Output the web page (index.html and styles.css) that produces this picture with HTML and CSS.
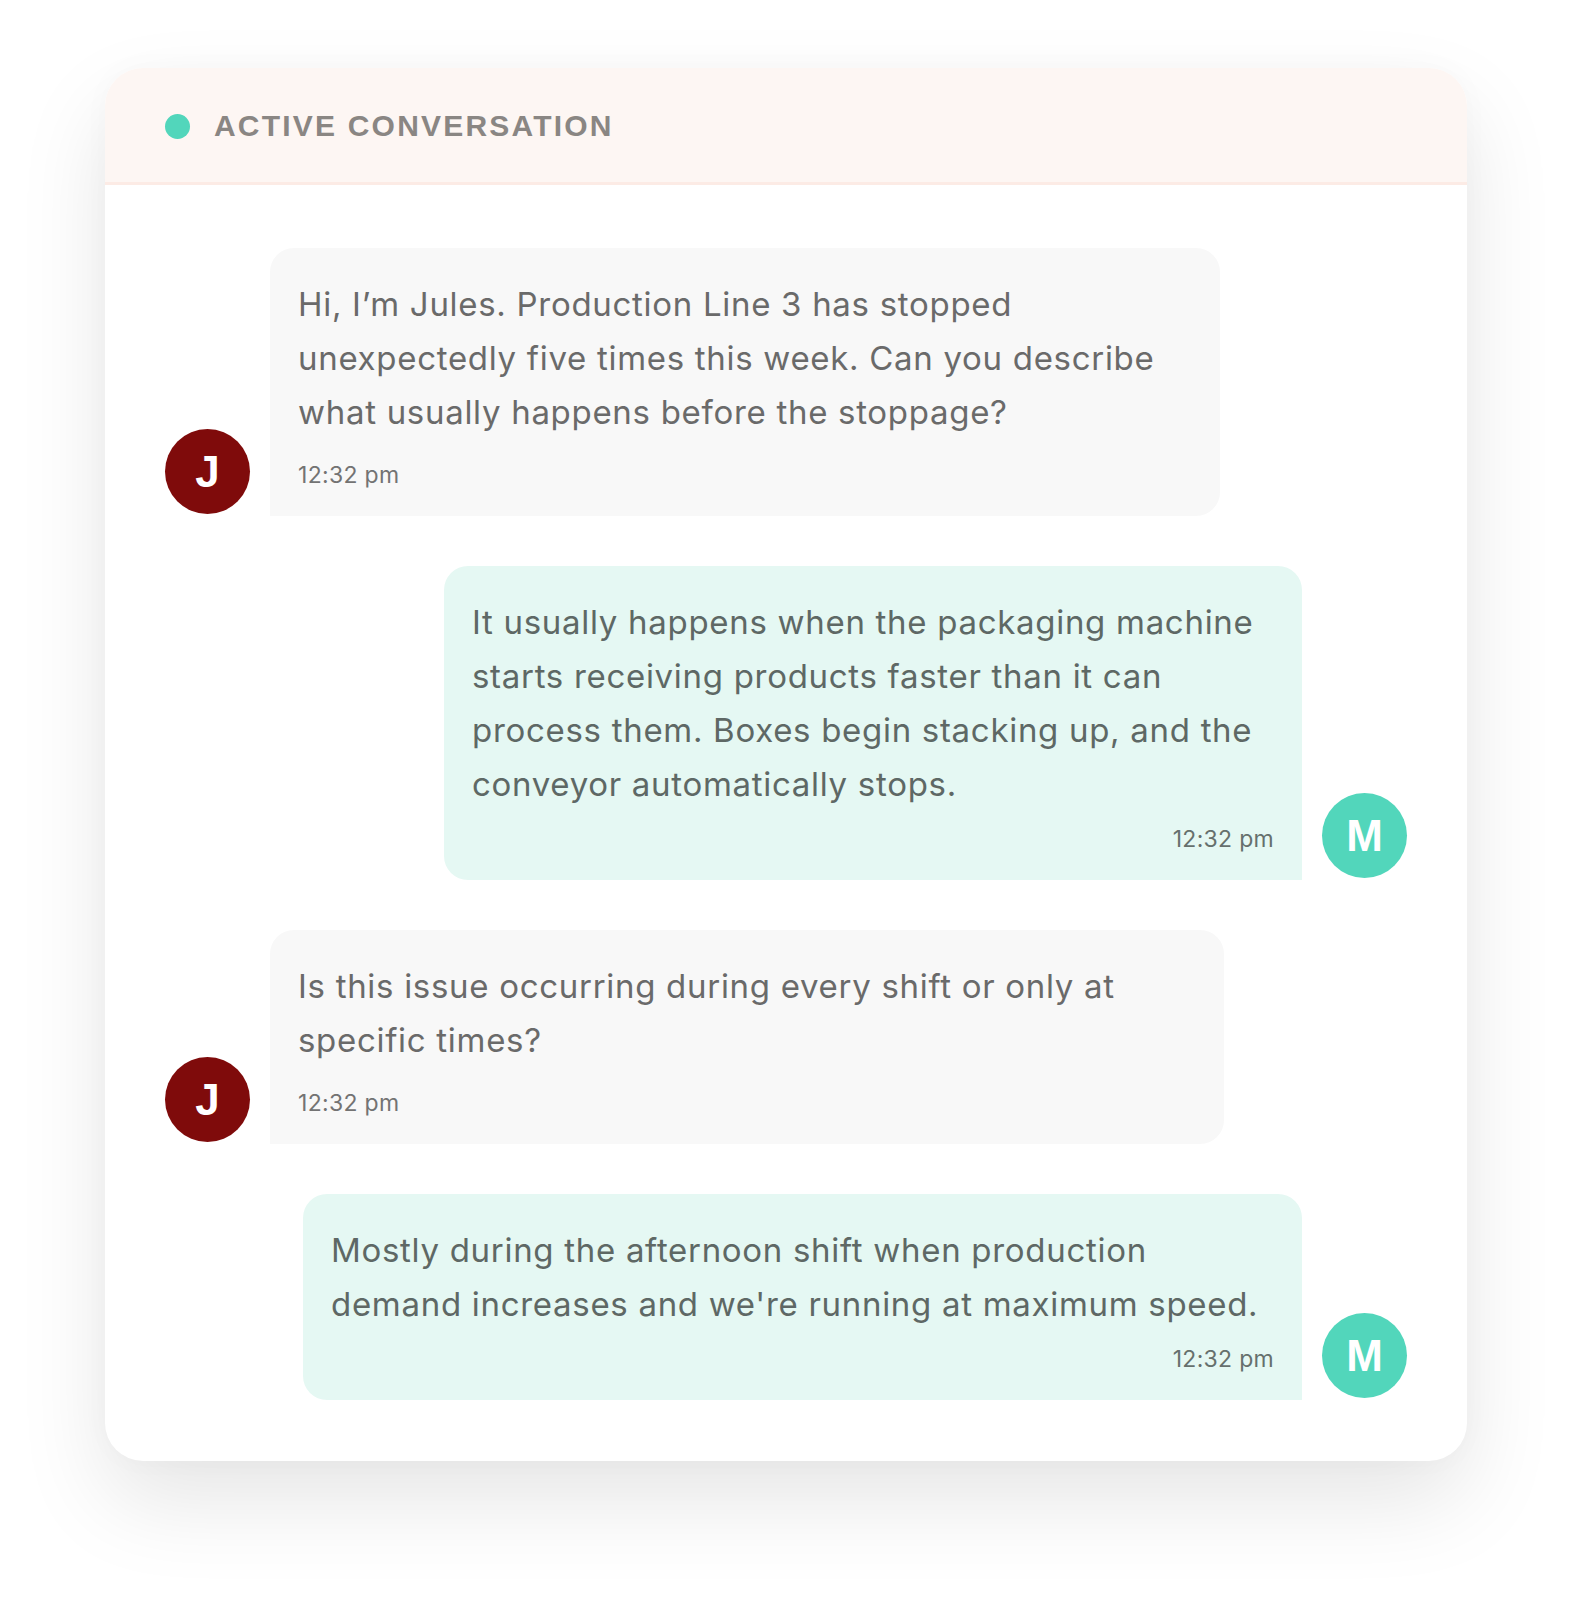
FILE: index.html
```html
<!DOCTYPE html>
<html lang="en">
<head>
  <meta charset="UTF-8" />
  <meta name="viewport" content="width=device-width, initial-scale=1.0"/>
  <title>Active Conversation</title>
  <link rel="stylesheet" href="styles.css">
</head>
<body>

  <div class="card">
    <div class="card-header">
      <span class="status-dot"></span>
      <h1 class="card-title">ACTIVE CONVERSATION</h1>
    </div>

    <div class="chat">
      <div class="row row-in">
        <div class="avatar avatar-j">J</div>
        <div class="bubble bubble-in w-950">
          <p class="msg">Hi, I’m Jules. Production Line 3 has stopped unexpectedly five times this week. Can you describe what usually happens before the stoppage?</p>
          <p class="time">12:32 pm</p>
        </div>
      </div>

      <div class="row row-out">
        <div class="bubble bubble-out w-858">
          <p class="msg">It usually happens when the packaging machine starts receiving products faster than it can process them. Boxes begin stacking up, and the conveyor automatically stops.</p>
          <p class="time">12:32 pm</p>
        </div>
        <div class="avatar avatar-m">M</div>
      </div>

      <div class="row row-in">
        <div class="avatar avatar-j">J</div>
        <div class="bubble bubble-in w-954">
          <p class="msg">Is this issue occurring during every shift or only at specific times?</p>
          <p class="time">12:32 pm</p>
        </div>
      </div>

      <div class="row row-out">
        <div class="bubble bubble-out w-999">
          <p class="msg">Mostly during the afternoon shift when production demand increases and we're running at maximum speed.</p>
          <p class="time">12:32 pm</p>
        </div>
        <div class="avatar avatar-m">M</div>
      </div>
    </div>
  </div>

</body>
</html>
```

FILE: styles.css
```css
* {
  margin: 0;
  padding: 0;
  box-sizing: border-box;
}
body {
  font-family: Inter, "Noto Sans", sans-serif;
  background: #fff;
  min-height: 100vh;
  padding: 68px 0 0 105px;
}
.card {
  width: 1362px;
  background: #fff;
  border-radius: 38px;
  overflow: hidden;
  box-shadow: 0 40px 90px rgba(0,0,0,0.1), 0 0 30px rgba(0,0,0,0.025);
}
.card-header {
  height: 117px;
  background: #fdf6f3;
  border-bottom: 3px solid #fcebe5;
  display: flex;
  align-items: center;
  padding-left: 60px;
  padding-top: 2px;
}
.status-dot {
  width: 25px;
  height: 25px;
  border-radius: 50%;
  background: #52d6bb;
  margin-right: 24px;
}
.card-title {
  font-family: "Liberation Sans", Arial, sans-serif;
  font-weight: bold;
  font-size: 30px;
  letter-spacing: 2.2px;
  color: #8a8683;
}
.chat {
  display: flex;
  flex-direction: column;
  gap: 50px;
  padding: 63px 60px 61px;
}
.row {
  display: flex;
  align-items: flex-end;
  gap: 20px;
}
.row-in {
  justify-content: flex-start;
}
.row-out {
  justify-content: flex-end;
}
.avatar {
  width: 85px;
  height: 85px;
  border-radius: 50%;
  flex-shrink: 0;
  margin-bottom: 2px;
  color: #fff;
  font-family: "Liberation Sans", Arial, sans-serif;
  font-weight: bold;
  font-size: 44px;
  display: flex;
  align-items: center;
  justify-content: center;
}
.avatar-j {
  background: #7f0b0b;
}
.avatar-m {
  background: #52d6bb;
}
.bubble {
  padding: 29px 28px 26px;
  border-radius: 24px;
}
.bubble-in {
  background: #f8f8f8;
  border-bottom-left-radius: 0;
}
.bubble-out {
  background: #e5f8f3;
  border-bottom-right-radius: 0;
}
.w-950 { width: 950px; }
.w-858 { width: 858px; }
.w-954 { width: 954px; }
.w-999 { width: 999px; }
.msg {
  font-size: 33px;
  line-height: 54px;
  letter-spacing: 0.7px;
  color: #6a6a6a;
}
.bubble-out .msg {
  color: #5e6865;
}
.time {
  font-size: 23px;
  line-height: 30px;
  letter-spacing: 0.3px;
  color: #737373;
  margin-top: 21px;
}
.bubble-out .time {
  text-align: right;
  margin-top: 13px;
  color: #66706d;
}
```
